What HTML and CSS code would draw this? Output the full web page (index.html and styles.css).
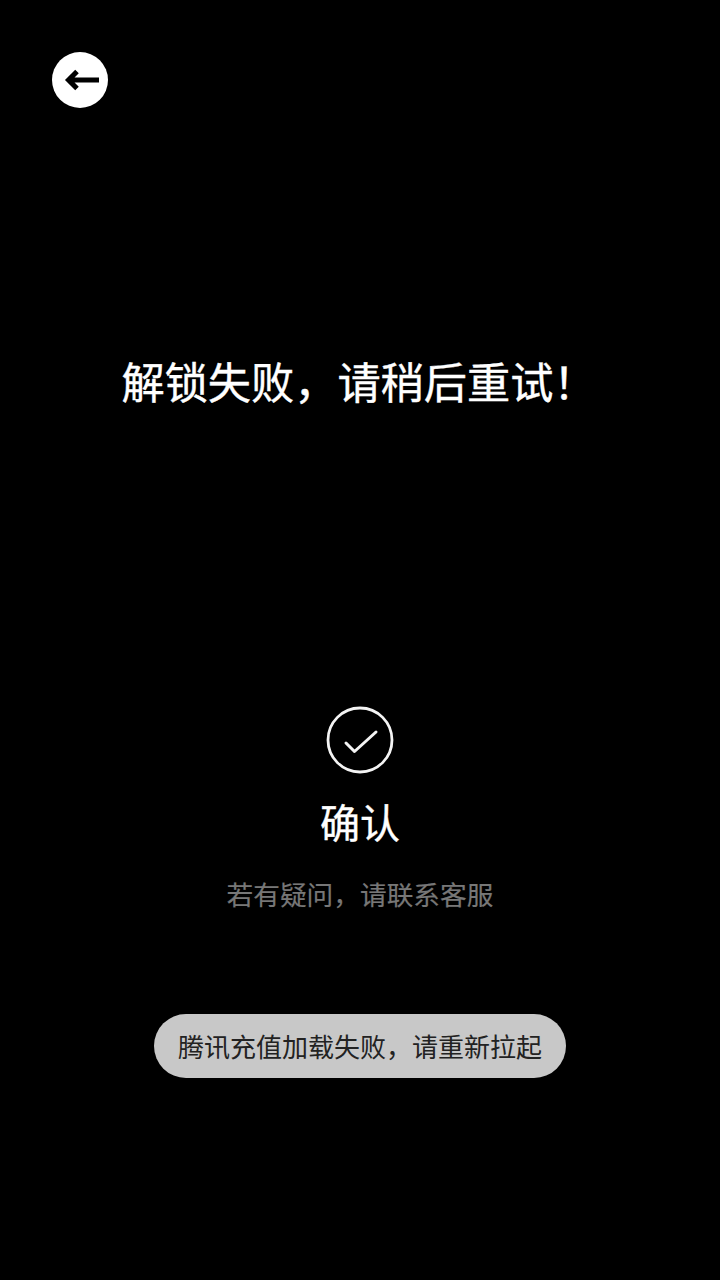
FILE: index.html
```html
<!DOCTYPE html>
<html lang="zh-CN">
<head>
    <meta charset="UTF-8">
    <meta name="viewport" content="width=device-width, initial-scale=1.0">
    <title>解锁失败</title>
    <link rel="stylesheet" href="styles.css">
</head>
<body>

<div class="page">
    <div class="back-btn">
        <svg class="back-icon" viewBox="0 0 40 24" width="40" height="24">
            <path d="M39 12H8.5M17 3.5L8.5 12L17 20.5" fill="none" stroke="#000" stroke-width="5"/>
        </svg>
    </div>

    <h1 class="title">解锁失败，请稍后重试！</h1>

    <div class="confirm">
        <svg class="confirm-icon" viewBox="0 0 68 68" width="68" height="68">
            <circle cx="34" cy="34" r="32" fill="none" stroke="#f4f4f4" stroke-width="2.8"/>
            <path d="M20 37L28.5 45.5L50 26" fill="none" stroke="#f4f4f4" stroke-width="3" stroke-linecap="round" stroke-linejoin="round"/>
        </svg>
        <div class="confirm-text">确认</div>
        <div class="help-text">若有疑问，请联系客服</div>
    </div>

    <div class="toast">腾讯充值加载失败，请重新拉起</div>
</div>

</body>
</html>
```

FILE: styles.css
```css
html, body {
    margin: 0;
    background: #000;
}
.page {
    height: 1280px;
    box-sizing: border-box;
    padding: 51.7px 0 0;
    display: flex;
    flex-direction: column;
    font-family: "Noto Sans CJK SC", sans-serif;
    overflow: hidden;
}
.back-btn {
    width: 56.6px;
    height: 56.6px;
    margin-left: 51.7px;
    border-radius: 50%;
    background: #fff;
    display: flex;
    align-items: center;
    justify-content: center;
}
.title {
    margin: 241.7px 0 0;
    padding-right: 2px;
    font-size: 43.2px;
    font-weight: 400;
    -webkit-text-stroke: 0.4px #fff;
    line-height: 60px;
    color: #fff;
    text-align: center;
}
.confirm {
    margin-top: 296px;
    display: flex;
    flex-direction: column;
    align-items: center;
}
.confirm-icon {
    display: block;
}
.confirm-text {
    margin-top: 17px;
    font-size: 40px;
    font-weight: 400;
    -webkit-text-stroke: 0.4px #fff;
    line-height: 60px;
    color: #fff;
}
.help-text {
    margin-top: 23px;
    font-size: 26.7px;
    -webkit-text-stroke: 0.2px #777;
    line-height: 40px;
    color: #777;
}
.toast {
    align-self: center;
    margin-top: 100px;
    width: 412px;
    height: 64px;
    border-radius: 32px;
    background: #c8c8c8;
    color: #222;
    font-size: 26px;
    line-height: 64px;
    text-align: center;
}
```
